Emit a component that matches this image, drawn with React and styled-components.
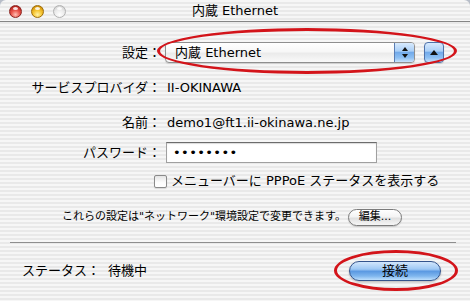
import React from 'react'
import styled, { createGlobalStyle } from 'styled-components'

const GlobalStyle = createGlobalStyle`
  html, body {
    margin: 0;
    padding: 0;
    background: #b7bdc8;
  }
  body {
    font-family: "DejaVu Sans", "Noto Sans CJK JP", sans-serif;
    color: #000;
  }
`

const pinstripe = `repeating-linear-gradient(to bottom, #f6f6f6 0px, #f6f6f6 2px, #e9e9e9 2px, #e9e9e9 4px)`

const aquaBlue = `linear-gradient(to bottom, #d8eafd 0%, #acd0f7 42%, #72aaea 50%, #8ec0f3 78%, #c9e3fc 100%)`

function App() {
    return (
        <>
            <GlobalStyle />
            <Window>
                <TitleBar>
                    <Lights>
                        <Light $kind="close" />
                        <Light $kind="min" />
                        <Light $kind="zoom" />
                    </Lights>
                    <Title>内蔵 Ethernet</Title>
                    <span />
                </TitleBar>

                <Body>
                    <FieldRow $top={20} $h={21}>
                        <Label>設定：</Label>
                        <Popup>
                            <PopupText>内蔵 Ethernet</PopupText>
                            <Stepper>
                                <Arrow $dir="up" />
                                <Arrow $dir="down" />
                            </Stepper>
                        </Popup>
                        <SquareButton>
                            <Arrow $dir="up" $big />
                        </SquareButton>
                    </FieldRow>

                    <FieldRow $top={15} $h={20}>
                        <Label>サービスプロバイダ：</Label>
                        <Value>II-OKINAWA</Value>
                    </FieldRow>

                    <FieldRow $top={15} $h={20}>
                        <Label>名前：</Label>
                        <Value>demo1@ft1.ii-okinawa.ne.jp</Value>
                    </FieldRow>

                    <FieldRow $top={9} $h={21}>
                        <Label>パスワード：</Label>
                        <PasswordBox>••••••••</PasswordBox>
                    </FieldRow>

                    <CheckRow>
                        <CheckBox />
                        <CheckText>メニューバーに PPPoE ステータスを表示する</CheckText>
                    </CheckRow>

                    <NoteRow>
                        <Note>これらの設定は"ネットワーク"環境設定で変更できます。</Note>
                        <PillButton>編集...</PillButton>
                    </NoteRow>

                    <Separator />

                    <StatusRow>
                        <StatusLabel>ステータス：</StatusLabel>
                        <StatusValue>待機中</StatusValue>
                        <ConnectButton>接続</ConnectButton>
                    </StatusRow>
                </Body>

                <Marker $left={157} $top={28} $w={300} $h={46} />
                <Marker $left={334} $top={250} $w={124} $h={41} />
            </Window>
        </>
    )
}

export default App



const Window = styled.div`
    position: relative;
    width: 470px;
    height: 301px;
    background: ${pinstripe};
    border-radius: 6px 6px 0 0;
    overflow: hidden;
    display: flex;
    flex-direction: column;
`

const TitleBar = styled.div`
    height: 21px;
    border-bottom: 1px solid #858585;
    display: grid;
    grid-template-columns: 1fr auto 1fr;
    align-items: center;
    flex-shrink: 0;
`

const Lights = styled.div`
    display: flex;
    gap: 9px;
    padding-left: 9px;
    padding-top: 1px;
`

const lightColors = {
    close: 'radial-gradient(circle at 50% 78%, #ffc0b4 0%, #ec5a50 40%, #c02a24 75%, #9b1a16 100%)',
    min: 'radial-gradient(circle at 50% 78%, #fff2a6 0%, #f6c838 40%, #d99a0e 75%, #b07808 100%)',
    zoom: 'radial-gradient(circle at 50% 78%, #ffffff 0%, #ececec 45%, #d6d6d6 80%, #c4c4c4 100%)',
}

const lightBorders = {
    close: '#8a2420',
    min: '#9c6c08',
    zoom: '#b0b0b0',
}

const Light = styled.div`
    position: relative;
    width: 13px;
    height: 13px;
    border-radius: 50%;
    box-sizing: border-box;
    border: 1px solid ${p => lightBorders[p.$kind]};
    background: ${p => lightColors[p.$kind]};

    &::after {
        content: "";
        position: absolute;
        left: 3px;
        top: 1px;
        width: 5px;
        height: 3px;
        border-radius: 50%;
        background: rgba(255, 255, 255, 0.85);
    }
`

const Title = styled.div`
    font-size: 13px;
    line-height: 21px;
    white-space: nowrap;
`

const Body = styled.div`
    display: flex;
    flex-direction: column;
`

const FieldRow = styled.div`
    display: flex;
    align-items: center;
    height: ${p => p.$h}px;
    margin-top: ${p => p.$top}px;
`

const Label = styled.div`
    width: 161px;
    flex-shrink: 0;
    text-align: right;
    font-size: 13px;
    line-height: 18px;
    white-space: nowrap;
`

const Value = styled.div`
    margin-left: 6px;
    font-size: 13px;
    line-height: 18px;
    white-space: nowrap;
`

const Popup = styled.div`
    margin-left: 4px;
    width: 250px;
    height: 21px;
    box-sizing: border-box;
    border: 1px solid #8f8f8f;
    border-radius: 4px;
    background: linear-gradient(to bottom, #ffffff 0%, #f7f7f7 45%, #ebebeb 55%, #f9f9f9 100%);
    display: flex;
    align-items: center;
    overflow: hidden;
    box-shadow: 0 1px 1px rgba(0, 0, 0, 0.12);
`

const PopupText = styled.div`
    flex: 1;
    padding-left: 9px;
    font-size: 13px;
    line-height: 18px;
    white-space: nowrap;
`

const Stepper = styled.div`
    width: 20px;
    height: 100%;
    box-sizing: border-box;
    border-left: 1px solid #5a7db3;
    background: ${aquaBlue};
    display: flex;
    flex-direction: column;
    align-items: center;
    justify-content: center;
    gap: 3px;
`

const Arrow = styled.div`
    width: 0;
    height: 0;
    border-left: ${p => (p.$big ? 4 : 3)}px solid transparent;
    border-right: ${p => (p.$big ? 4 : 3)}px solid transparent;
    ${p => (p.$dir === 'up' ? 'border-bottom' : 'border-top')}: ${p => (p.$big ? 5 : 4)}px solid #111;
`

const SquareButton = styled.div`
    margin-left: 9px;
    width: 20px;
    height: 21px;
    box-sizing: border-box;
    border: 1px solid #4f72aa;
    border-radius: 4px;
    background: ${aquaBlue};
    display: flex;
    align-items: center;
    justify-content: center;
    box-shadow: 0 1px 1px rgba(0, 0, 0, 0.15);
`

const PasswordBox = styled.div`
    margin-left: 5px;
    width: 211px;
    height: 21px;
    box-sizing: border-box;
    border: 1px solid #a0a0a0;
    border-top-color: #6c6c6c;
    background: #fff;
    box-shadow: inset 0 1px 1px rgba(0, 0, 0, 0.15);
    padding-left: 6px;
    font-size: 13px;
    line-height: 19px;
    letter-spacing: 0.4px;
    white-space: nowrap;
`

const CheckRow = styled.div`
    display: flex;
    align-items: center;
    height: 18px;
    margin-top: 9px;
    padding-left: 154px;
`

const CheckBox = styled.div`
    width: 13px;
    height: 13px;
    box-sizing: border-box;
    border: 1px solid #8a8a8a;
    border-radius: 2px;
    background: linear-gradient(to bottom, #e4e4e4 0%, #fdfdfd 60%, #ffffff 100%);
    box-shadow: 0 1px 1px rgba(0, 0, 0, 0.12);
    flex-shrink: 0;
`

const CheckText = styled.div`
    margin-left: 4px;
    font-size: 13px;
    line-height: 18px;
    white-space: nowrap;
`

const NoteRow = styled.div`
    display: flex;
    align-items: center;
    justify-content: space-between;
    height: 20px;
    margin-top: 17px;
    padding: 0 68px 0 62px;
`

const Note = styled.div`
    font-size: 11px;
    line-height: 16px;
    white-space: nowrap;
`

const PillButton = styled.div`
    width: 54px;
    height: 17px;
    box-sizing: border-box;
    border: 1px solid #7b7b7b;
    border-radius: 9px;
    background: linear-gradient(to bottom, #ffffff 0%, #f4f4f4 45%, #e0e0e0 55%, #f6f6f6 100%);
    box-shadow: 0 1px 1px rgba(0, 0, 0, 0.15);
    display: flex;
    align-items: center;
    justify-content: center;
    font-size: 11px;
    line-height: 14px;
    flex-shrink: 0;
`

const Separator = styled.div`
    height: 1px;
    margin: 15px 14px 0 10px;
    background: #8e8e8e;
`

const StatusRow = styled.div`
    display: flex;
    align-items: center;
    height: 21px;
    margin-top: 17px;
    padding: 0 29px 0 22px;
`

const StatusLabel = styled.div`
    font-size: 13px;
    line-height: 18px;
    white-space: nowrap;
`

const StatusValue = styled.div`
    margin-left: 8px;
    font-size: 13px;
    line-height: 18px;
    white-space: nowrap;
`

const ConnectButton = styled.div`
    margin-left: auto;
    width: 92px;
    height: 20px;
    box-sizing: border-box;
    border: 1px solid #34548c;
    border-radius: 10px;
    background: linear-gradient(to bottom, #d2e6fc 0%, #9ec8f4 40%, #5b99e2 52%, #7fb6ee 78%, #bfe0fd 100%);
    box-shadow: 0 1px 2px rgba(0, 0, 0, 0.25);
    display: flex;
    align-items: center;
    justify-content: center;
    font-size: 13px;
    line-height: 18px;
`

const Marker = styled.div`
    position: absolute;
    left: ${p => p.$left}px;
    top: ${p => p.$top}px;
    width: ${p => p.$w}px;
    height: ${p => p.$h}px;
    box-sizing: border-box;
    border: 3px solid #d3141a;
    border-radius: 50%;
    pointer-events: none;
`
